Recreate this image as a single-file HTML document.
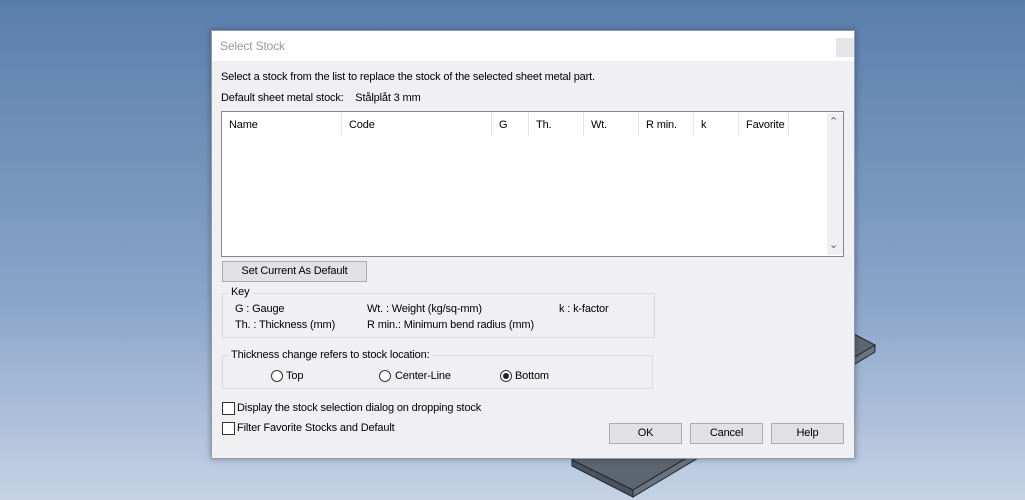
<!DOCTYPE html>
<html><head><style>
body{margin:0;width:1025px;height:500px;overflow:hidden;background:linear-gradient(#5a7eac,#8aa5c9 60%,#c5d2e5);font-family:"Liberation Sans",sans-serif;font-size:11px;letter-spacing:-0.15px;color:#000;position:relative}
.a{position:absolute;white-space:nowrap}
.dlg{position:absolute;left:211px;top:30px;width:644px;height:429px;background:#f0eff2;box-shadow:0 0 6px rgba(0,0,0,.35);border:1px solid #8f9bb0;box-sizing:border-box}
.btn{position:absolute;background:#e1e1e4;border:1px solid #adadad;box-sizing:border-box;text-align:center}
.grp{position:absolute;border:1px solid #dcdcdc;box-sizing:border-box}
.rad{position:absolute;width:12px;height:12px;border:1px solid #333;border-radius:50%;box-sizing:border-box;background:#fff}
.chk{position:absolute;width:13px;height:13px;border:1px solid #333;box-sizing:border-box;background:#fff}
.hd{position:absolute;top:0;height:24px;border-right:1px solid #e5e5e5;line-height:26px;padding-left:7px;box-sizing:border-box}
</style></head><body>
<svg class="a" style="left:0;top:0" width="1025" height="500">
<polygon points="572,460 633,490 875,345 812,312" fill="#5d6670" stroke="#1d2733"/>
<polygon points="572,460 572,466 633,497 633,490" fill="#4b545e" stroke="#1d2733"/>
<polygon points="633,490 633,497 875,352 875,345" fill="#6a747e" stroke="#1d2733"/>
</svg>
<div class="dlg">
 <div class="a" style="left:0;top:0;width:642px;height:30px;background:#fff"></div>
 <div class="a" style="left:8px;top:8px;color:#999;font-size:12px">Select Stock</div>
 <div class="a" style="left:624px;top:7px;width:18px;height:19px;background:#e6e6ea"></div>
 <div class="a" style="left:9px;top:40px">Select a stock from the list to replace the stock of the selected sheet metal part.</div>
 <div class="a" style="left:9px;top:61px">Default sheet metal stock:&nbsp;&nbsp;&nbsp; Stålplåt 3 mm</div>
 <div class="a" style="left:9px;top:80px;width:623px;height:146px;background:#fff;border:1px solid #828790;box-sizing:border-box">
  <div class="hd" style="left:0;width:120px">Name</div>
  <div class="hd" style="left:120px;width:150px">Code</div>
  <div class="hd" style="left:270px;width:37px">G</div>
  <div class="hd" style="left:307px;width:55px">Th.</div>
  <div class="hd" style="left:362px;width:55px">Wt.</div>
  <div class="hd" style="left:417px;width:55px">R min.</div>
  <div class="hd" style="left:472px;width:45px">k</div>
  <div class="hd" style="left:517px;width:50px">Favorite</div>
  <div class="a" style="left:605px;top:1px;width:16px;height:142px;background:#f0f0f2"></div>
  <div class="a" style="left:607px;top:3px;color:#666;font-size:11px">&#8963;</div>
  <div class="a" style="left:607px;top:126px;color:#666;font-size:11px">&#8964;</div>
 </div>
 <div class="btn" style="left:10px;top:230px;width:145px;height:21px;line-height:19px">Set Current As Default</div>
 <div class="grp" style="left:10px;top:262px;width:433px;height:45px"></div>
 <div class="a" style="left:17px;top:255px;background:#f0eff2;padding:0 2px">Key</div>
 <div class="a" style="left:23px;top:272px">G : Gauge</div>
 <div class="a" style="left:155px;top:272px">Wt. : Weight (kg/sq-mm)</div>
 <div class="a" style="left:347px;top:272px">k : k-factor</div>
 <div class="a" style="left:23px;top:288px">Th. : Thickness (mm)</div>
 <div class="a" style="left:155px;top:288px">R min.: Minimum bend radius (mm)</div>
 <div class="grp" style="left:10px;top:324px;width:431px;height:34px"></div>
 <div class="a" style="left:17px;top:318px;background:#f0eff2;padding:0 2px">Thickness change refers to stock location:</div>
 <div class="rad" style="left:59px;top:339px"></div><div class="a" style="left:74px;top:339px">Top</div>
 <div class="rad" style="left:167px;top:339px"></div><div class="a" style="left:183px;top:339px">Center-Line</div>
 <div class="rad" style="left:288px;top:339px"><div style="position:absolute;left:2px;top:2px;width:6px;height:6px;border-radius:50%;background:#222"></div></div><div class="a" style="left:303px;top:339px">Bottom</div>
 <div class="chk" style="left:10px;top:371px"></div><div class="a" style="left:25px;top:371px">Display the stock selection dialog on dropping stock</div>
 <div class="chk" style="left:10px;top:391px"></div><div class="a" style="left:25px;top:391px">Filter Favorite Stocks and Default</div>
 <div class="btn" style="left:397px;top:392px;width:73px;height:21px;line-height:19px">OK</div>
 <div class="btn" style="left:478px;top:392px;width:73px;height:21px;line-height:19px">Cancel</div>
 <div class="btn" style="left:559px;top:392px;width:73px;height:21px;line-height:19px">Help</div>
</div>
</body></html>
